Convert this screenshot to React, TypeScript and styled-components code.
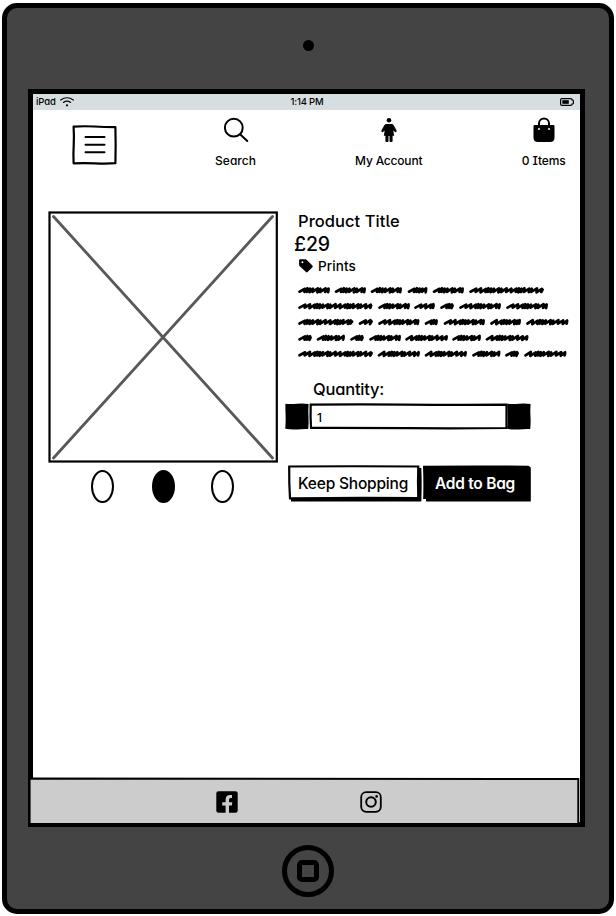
import React from "react";
import styled, { createGlobalStyle } from "styled-components";

const GlobalStyle = createGlobalStyle`
  * { box-sizing: border-box; }
  body {
    margin: 0;
    background: #fff;
    color: #000;
    font-family: Inter, "Open Sans", sans-serif;
    font-feature-settings: "cv11", "cv08", "cv05", "calt" 0;
  }
  button, input { font: inherit; font-feature-settings: inherit; color: inherit; }
  svg { display: block; flex: none; overflow: visible; }
`;

const Page = styled.div`
  width: 616px;
  height: 916px;
  padding: 3px 2px 2px;
  overflow: hidden;
`;

const Device = styled.div`
  display: flex;
  flex-direction: column;
  align-items: center;
  width: 612px;
  height: 911px;
  border: 5px solid #000;
  border-radius: 15px;
  background: #444;
`;

const Camera = styled.div`
  width: 11px;
  height: 11px;
  margin: 32px 0 38px;
  border-radius: 50%;
  background: #000;
`;

const Screen = styled.div`
  display: flex;
  flex-direction: column;
  width: 557px;
  height: 738px;
  margin-right: 3px;
  border: 5px solid #000;
  background: #fff;
`;

const HomeButton = styled.div`
  display: grid;
  place-items: center;
  width: 52px;
  height: 52px;
  margin-top: 18px;
  border: 5px solid #000;
  border-radius: 50%;
`;

const HomeGlyph = styled.div`
  width: 22px;
  height: 22px;
  border: 5px solid #000;
  border-radius: 5px;
`;

const Label = styled.span<{ $size: number; $track?: number; $weight?: number }>`
  font-size: ${(p) => p.$size}px;
  line-height: 20px;
  letter-spacing: ${(p) => p.$track ?? 0}px;
  font-weight: ${(p) => p.$weight ?? 500};
  white-space: nowrap;
`;

const StatusBar = styled.div`
  display: grid;
  grid-template-columns: 1fr auto 1fr;
  grid-template-rows: 16px;
  align-items: center;
  height: 16px;
  flex: none;
  padding: 0 6px 0 3px;
  background: #d7dee1;
`;

const StatusText = styled(Label)`
  line-height: 16px;
`;

const StatusLeft = styled.div`
  display: flex;
  align-items: center;
  gap: 4px;
`;

const StatusRight = styled.div`
  display: flex;
  justify-content: flex-end;
`;

const Clock = styled(StatusText)`
  padding-left: 4px;
`;

const Header = styled.header`
  display: grid;
  grid-template-columns: 123px 159px 147.4px 45px 72.6px;
  height: 101px;
  flex: none;
  padding-top: 8px;
  justify-items: center;
  align-items: start;
`;

const NavItem = styled.a<{ $last?: boolean }>`
  display: flex;
  flex-direction: column;
  align-items: center;
  gap: 9px;
  ${(p) => p.$last && "grid-column: 5;"}
`;

const Sketched = styled.button<{ $w: number; $h: number; $inverse?: boolean }>`
  position: relative;
  display: flex;
  align-items: center;
  flex: none;
  width: ${(p) => p.$w}px;
  height: ${(p) => p.$h}px;
  padding: 0;
  border: 0;
  background: transparent;
  color: ${(p) => (p.$inverse ? "#fff" : "#000")};
`;

const MenuButton = styled(Sketched)`
  justify-content: center;
  margin-top: 7px;
`;

const ActionButton = styled(Sketched)<{ $pad: number }>`
  padding: 0 0 0 ${(p) => p.$pad}px;
`;

const Outline = styled.svg`
  position: absolute;
  inset: 0;
  width: 100%;
  height: 100%;
`;

const Caption = styled(Label)`
  position: relative;
`;

const Product = styled.main`
  display: grid;
  grid-template-columns: 230px 1fr;
  gap: 7px;
  flex: 1;
  padding-left: 15px;
  align-items: start;
`;

const Gallery = styled.section`
  display: flex;
  flex-direction: column;
  gap: 7px;
`;

const Dots = styled.div`
  display: flex;
  gap: 37px;
  padding-left: 43px;
`;

const Dot = styled.span<{ $active?: boolean }>`
  width: 23px;
  height: 33px;
  margin-right: ${(p) => (p.$active ? "-1px" : 0)};
  margin-left: ${(p) => (p.$active ? "1px" : 0)};
  border: 2px solid #000;
  border-radius: 50%;
  background: ${(p) => (p.$active ? "#000" : "#fff")};
`;

const Details = styled.section`
  display: flex;
  flex-direction: column;
  align-items: flex-start;
`;

const Line = styled.div<{ $left: number; $top: number; $gap?: number }>`
  display: flex;
  align-items: center;
  gap: ${(p) => p.$gap ?? 0}px;
  height: 20px;
  margin: ${(p) => p.$top}px 0 0 ${(p) => p.$left}px;
`;

const Description = styled.div`
  margin: 8px 0 0 13px;
`;

const Stepper = styled.div`
  display: flex;
  margin-top: 4px;
`;

const Quantity = styled.div`
  position: relative;
  display: flex;
  width: 198px;
  height: 27px;
`;

const QuantityInput = styled.input`
  position: relative;
  width: 100%;
  padding: 2px 0 0 8px;
  border: 0;
  outline: 0;
  background: transparent;
  font-size: 12px;
  font-weight: 500;
`;

const Actions = styled.div`
  display: flex;
  gap: 1px;
  margin: 35px 0 0 3px;
`;

const Footer = styled.footer`
  position: relative;
  display: flex;
  align-items: center;
  gap: 122px;
  width: 550px;
  height: 47px;
  flex: none;
  margin: 0 0 -2px -4px;
  padding: 2px 0 0 187px;
`;

const SocialIcon = styled.svg`
  position: relative;
`;

const WORDS: [number, number][][] = [
  [[0, 32], [36.5, 68], [72.5, 104], [109.5, 129.5], [134.5, 166], [171, 246]],
  [[0, 74.5], [80, 112], [116, 137], [142, 156], [161, 203], [208, 250]],
  [[0, 55.5], [60.5, 75], [80, 121.5], [126.5, 140], [145.5, 187], [192, 223], [228, 270.5]],
  [[0, 14], [18.5, 47], [52, 66], [71, 103], [107, 150], [154, 183], [187.5, 230.5]],
  [[0, 75], [79.5, 122], [126.5, 169], [174, 202.5], [207, 221], [226, 268.5]],
];

// Slanted pen strokes of varying width that run from one end of a word to the other.
const scribble = (from: number, to: number, y: number) => {
  let x = from + 1.5;
  let d = `M${x} ${y + 1.4}`;
  const steps = [5.2, 4.8, 5, 2.4, 2.6, 3, 4.9, 2.5];
  const lift = [1.6, 1.9, 1.5, 2, 1.7];
  let i = Math.round(to - from) % 3;
  while (x < to - 4) {
    const end = Math.min(x + steps[i % steps.length] + 0.5, to - 1.4);
    d += `L${end} ${y - lift[i % 5]}L${end - 0.5} ${y + lift[(i + 2) % 5]}`;
    x = end - 0.5;
    i++;
  }
  return d + `L${to - 1.4} ${y - 0.6}`;
};

const WifiIcon = () => (
  <svg width="14" height="10" viewBox="0 0 14 10" fill="none" stroke="#000" strokeLinecap="round">
    <path d="M.7 3.1Q7-1.6 13.3 3.1" strokeWidth="1.2" />
    <path d="M3.4 5.4Q7 2.7 10.6 5.4" strokeWidth="1.2" />
    <circle cx="7" cy="8.3" r="1.1" fill="#000" stroke="none" />
  </svg>
);

const BatteryIcon = () => (
  <svg width="14" height="8" viewBox="0 0 14 8">
    <path d="M2 .6H10.6Q12 .6 12 1.8 13.4 1.8 13.4 3V5Q13.4 6.2 12 6.2 12 7.4 10.6 7.4H2Q.6 7.4.6 6V2Q.6.6 2 .6Z" fill="none" stroke="#000" strokeWidth="1.2" />
    <rect x="2.3" y="2.2" width="6.5" height="3.6" />
  </svg>
);

const SearchIcon = () => (
  <svg width="24" height="24" viewBox="0 0 24 24" fill="none" stroke="#000" strokeWidth="2" strokeLinecap="round">
    <circle cx="9.8" cy="9.7" r="8.9" />
    <path d="M16.3 16.5 23.3 23" />
  </svg>
);

const PersonIcon = () => (
  <svg width="16" height="24" viewBox="0 0 16 24">
    <circle cx="8" cy="2.3" r="2.3" />
    <path d="M5.4 6H10.6Q11.8 6 12.7 7.2L15.6 12.6Q15.9 13.8 14.8 14.2 14 14.3 13.5 13.6L12.3 12.4 13.2 17.8H11.6V23Q11.6 24 10.6 24H9.4Q8.5 24 8.5 23V18H7.5V23Q7.5 24 6.6 24H5.4Q4.4 24 4.4 23V17.8H2.8L3.7 12.4 2.5 13.6Q2 14.3 1.2 14.2.1 13.8.4 12.6L3.3 7.2Q4.2 6 5.4 6Z" />
  </svg>
);

const BagIcon = () => (
  <svg width="22" height="24" viewBox="0 0 22 24">
    <path d="M6 10V5.5A5 5 0 0 1 16 5.5V10" fill="none" stroke="#000" strokeWidth="2" />
    <path d="M1.4 7H20.6Q21.5 7 21.5 8V19.5Q21.5 24 17 24H5Q.5 24 .5 19.5V8Q.5 7 1.4 7Z" />
    <circle cx="6" cy="11" r="1" fill="#fff" />
    <circle cx="16" cy="11" r="1" fill="#fff" />
  </svg>
);

const TagIcon = () => (
  <svg width="14" height="14" viewBox="0 0 14 14">
    <path fillRule="evenodd" d="M1.2.2H6.4Q7 .2 7.5.7L13.4 6.6Q14.2 7.4 13.4 8.2L8.6 13Q7.8 13.8 7 13L.8 7.2Q.1 6.6.1 6V1.3Q.1.2 1.2.2ZM3.4 2.3A1 1 0 1 0 3.4 4.3 1 1 0 1 0 3.4 2.3Z" />
  </svg>
);

const StepButton = () => (
  <Sketched $w={24} $h={27} aria-label="Change quantity">
    <Outline viewBox="0 0 24 27">
      <path d="M.4.8Q6 1.3 12 .7T23.6 1Q23.1 8 23.5 14T23.2 26Q17 25.8 12 26.4T.3 25.8Q.9 18 .6 12T.4.8Z" />
    </Outline>
  </Sketched>
);

export default function App() {
  return (
    <>
      <GlobalStyle />
      <Page>
        <Device>
          <Camera />
          <Screen>
            <StatusBar>
              <StatusLeft>
                <StatusText $size={9.5} $track={-0.1}>iPad</StatusText>
                <WifiIcon />
              </StatusLeft>
              <Clock $size={9.5} $track={-0.2}>1:14 PM</Clock>
              <StatusRight><BatteryIcon /></StatusRight>
            </StatusBar>

            <Header>
              <MenuButton $w={45} $h={40} aria-label="Menu">
                <Outline viewBox="0 0 45 40" fill="none" stroke="#000" strokeLinejoin="round" strokeLinecap="round">
                  <path d="M1.6 1.6Q12 1 22 1.5T43.4 2.2Q43.9 20 43.4 38.2 34 38.8 23 38.3T1.6 38.3Q1.2 29 1.7 20T1.6 1.6Z" strokeWidth="2.2" />
                  <path d="M13.5 12H32.5M13.5 19.7H32.5M13.5 27.3H32.5" strokeWidth="2" />
                </Outline>
              </MenuButton>
              <NavItem>
                <SearchIcon />
                <Label $size={12}>Search</Label>
              </NavItem>
              <NavItem>
                <PersonIcon />
                <Label $size={12} $track={-0.2}>My Account</Label>
              </NavItem>
              <NavItem $last>
                <BagIcon />
                <Label $size={12} $track={-0.1}>0 Items</Label>
              </NavItem>
            </Header>

            <Product>
              <Gallery>
                <svg width="230" height="252" viewBox="0 0 230 252" fill="none">
                  <rect x="1.5" y="1.5" width="227.3" height="249" stroke="#000" strokeWidth="2.2" />
                  <path d="M5.5 5.5 224.5 247M224.5 5.5 5.5 247" stroke="#585858" strokeWidth="2.8" strokeLinecap="round" />
                </svg>
                <Dots>
                  <Dot />
                  <Dot $active />
                  <Dot />
                </Dots>
              </Gallery>

              <Details>
                <Line $left={13} $top={0}><Label $size={16.5} $track={0.05}>Product Title</Label></Line>
                <Line $left={9} $top={3}><Label $size={19.5} $track={-0.2}>£29</Label></Line>
                <Line $left={14} $top={2} $gap={5}>
                  <TagIcon />
                  <Label $size={13.5} $track={0.1}>Prints</Label>
                </Line>
                <Description>
                  <svg width="271" height="72" viewBox="0 0 271 72" fill="none" stroke="#000" strokeWidth="2.7" strokeLinecap="round" strokeLinejoin="round">
                    {WORDS.map((row, r) => row.map(([a, b]) => (
                      <path key={`${r}-${a}`} d={scribble(a, b, 6.3 + r * 15.9)} />
                    )))}
                  </svg>
                </Description>
                <Line $left={28} $top={23}><Label $size={16.5} $track={-0.2}>Quantity:</Label></Line>
                <Stepper>
                  <StepButton />
                  <Quantity>
                    <Outline viewBox="0 0 198 27" fill="none" stroke="#000" strokeWidth="2.2">
                      <path d="M1.7 1.7Q45 1.2 95 1.6T197.5 1.7V25Q150 25.6 100 25.2T2 24.9Q1.3 13 1.7 1.7Z" />
                    </Outline>
                    <QuantityInput defaultValue="1" aria-label="Quantity" />
                  </Quantity>
                  <StepButton />
                </Stepper>
                <Actions>
                  <ActionButton $w={134} $h={37} $pad={10}>
                    <Outline viewBox="0 0 134 37">
                      <path d="M3 3H133.300Q134 18 133.300 36.500H3Z" />
                      <path d="M1.2 1.500Q65 1 130.300 1.500 129.700 16 130.300 33.200 70 32.400 2 33.400 1 18 1.200 1.500Z" fill="#fff" stroke="#000" strokeWidth="2.2" />
                    </Outline>
                    <Caption $size={15.5} $track={-0.2}>Keep Shopping</Caption>
                  </ActionButton>
                  <ActionButton $w={108} $h={37} $pad={12} $inverse>
                    <Outline viewBox="0 0 108 37">
                      <path d="M0 .7Q54 .3 105.500.700L107.800 2.500V36.500H3V34H.200Q.600 17 0 .7Z" />
                    </Outline>
                    <Caption $size={15.5} $weight={600} $track={-0.25}>Add to Bag</Caption>
                  </ActionButton>
                </Actions>
              </Details>
            </Product>

            <Footer>
              <Outline viewBox="0 0 550 47">
                <path d="M.6 1.5 549.3 2V47H.6Z" fill="#ccc" stroke="#000" strokeWidth="2" />
              </Outline>
              <SocialIcon width="22" height="22" viewBox="0 0 22 22">
                <rect x=".3" y=".3" width="21.4" height="21.4" rx="2.2" />
                <path d="M9.6 22V14.6H6.2V11.3H9.6V9Q9.6 4 14 4H16V7.1H14.6Q13 7.1 13 9V11.3H16.3L15.8 14.6H13V22Z" fill="#ccc" />
              </SocialIcon>
              <SocialIcon width="22" height="22" viewBox="0 0 22 22" fill="none" stroke="#000" strokeWidth="1.8">
                <rect x="1.2" y="1.2" width="19.6" height="19.6" rx="5" />
                <circle cx="11" cy="11" r="4.8" strokeWidth="2" />
                <circle cx="16.6" cy="5.4" r="1.3" fill="#000" stroke="none" />
              </SocialIcon>
            </Footer>
          </Screen>
          <HomeButton><HomeGlyph /></HomeButton>
        </Device>
      </Page>
    </>
  );
}
